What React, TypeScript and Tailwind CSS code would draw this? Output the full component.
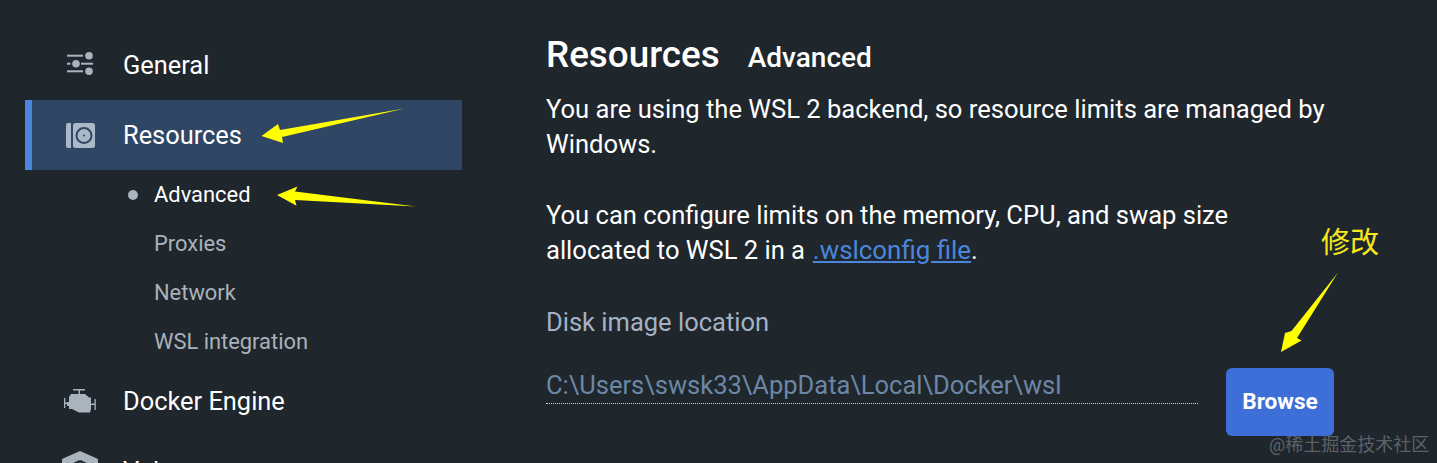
import React from "react";

const font = { fontFamily: "Roboto, 'Noto Sans CJK SC', sans-serif" };

function GeneralIcon() {
  return (
    <svg className="mb-[2px]" width="26" height="24" viewBox="0 0 26 24" fill="#aab4bf">
      <rect x="0" y="2.700" width="16" height="2" />
      <circle cx="22" cy="3.800" r="3.800" />
      <rect x="0" y="10.700" width="3.500" height="2" />
      <circle cx="9" cy="11.700" r="3.800" />
      <rect x="14" y="10.700" width="12" height="2" />
      <rect x="0" y="18.300" width="16" height="2" />
      <circle cx="22" cy="19.300" r="3.800" />
    </svg>
  );
}

function ResourcesIcon() {
  return (
    <svg width="29" height="25" viewBox="0 0 29 25">
      <path d="M0 2a2 2 0 0 1 2-2h3v25H2a2 2 0 0 1-2-2z" fill="#aab8c8" />
      <rect x="7" y="0" width="22" height="25" rx="2.500" fill="#aab8c8" />
      <circle cx="18" cy="12.500" r="7.500" fill="none" stroke="#2f4765" strokeWidth="2" />
      <circle cx="18" cy="12.500" r="1" fill="#2f4765" />
    </svg>
  );
}

function EngineIcon() {
  return (
    <svg width="32" height="24" viewBox="0 0 32 24" fill="#aab4bf">
      <path d="M9 0h12v1.400h-5V5h5l4 3.500h2V20l-1 3.500H15L8 20H5v-3H3v-4h2V8l2-3h7.500V1.400H9z" />
      <rect x="0" y="9" width="1.300" height="10" />
      <rect x="1" y="13.500" width="3" height="1.500" />
      <rect x="30.500" y="10" width="1.300" height="11" />
      <rect x="27" y="14.500" width="4" height="1.500" />
    </svg>
  );
}

function VolumesIcon() {
  return (
    <svg width="36" height="40" viewBox="0 0 36 40" fill="#aab4bf">
      <path d="M18 0l18 8v24l-18 8-18-8V8z" />
      <path d="M18 10l-8 4v9M18 10l8 4v9" fill="none" stroke="#1f262c" strokeWidth="2.500" />
    </svg>
  );
}

function MainItem({ icon, label, active }: { icon: React.ReactNode; label: string; active?: boolean }) {
  return (
    <div
      className={
        active
          ? "flex h-[70px] items-center border-l-[7px] border-[#4c86dc] bg-[#2f4765] pl-[18px]"
          : "flex h-[70px] items-center pl-[25px]"
      }
    >
      <span className="mr-[13px] flex w-[60px] items-center justify-center">{icon}</span>
      <span className="pt-[2px] text-[25.400px] leading-none text-white">{label}</span>
    </div>
  );
}

function SubItem({ label, active }: { label: string; active?: boolean }) {
  return (
    <div className="relative flex h-[49px] items-center pl-[129px]">
      {active && <span className="absolute left-[103px] h-[10px] w-[10px] rounded-full bg-[#aab4bf]" />}
      <span className={active ? "pt-[1px] text-[21.900px] leading-none text-white" : "pt-[1px] text-[21.900px] leading-none text-[#aab2ba]"}>
        {label}
      </span>
    </div>
  );
}

export default function App() {
  return (
    <div className="relative flex h-[463px] w-[1437px] overflow-hidden bg-[#1f262c]" style={font}>
      <nav className="ml-[25px] w-[437px] shrink-0 pt-[30px]">
        <MainItem icon={<GeneralIcon />} label="General" />
        <MainItem icon={<ResourcesIcon />} label="Resources" active />
        <SubItem label="Advanced" active />
        <SubItem label="Proxies" />
        <SubItem label="Network" />
        <SubItem label="WSL integration" />
        <MainItem icon={<EngineIcon />} label="Docker Engine" />
        <MainItem icon={<VolumesIcon />} label="Volumes" />
      </nav>

      <main className="ml-[84px] w-[806px] pt-[34px] text-white">
        <div className="flex items-baseline">
          <h1 className="text-[36.800px] font-medium leading-[42px]">Resources</h1>
          <h2 className="ml-[28px] text-[28px] font-medium leading-[42px]">Advanced</h2>
        </div>
        <p className="mt-[12.500px] text-[25.550px] leading-[35px]">
          You are using the WSL 2 backend, so resource limits are managed by
          <br />
          Windows.
        </p>
        <p className="mt-[36px] text-[25.550px] leading-[35px]">
          You can configure limits on the memory, CPU, and swap size
          <br />
          allocated to WSL 2 in a <span className="ml-[1.500px] text-[25.900px] text-[#4c86dc] underline">.wslconfig file</span>.
        </p>
        <div className="mt-[37px] text-[25.500px] leading-[35px] text-[#a5b2c4]">Disk image location</div>
        <div className="mt-[28px] flex items-start">
          <div className="w-[652px] border-b border-dotted border-[#d0d5da] text-[25.500px] leading-[35px] text-[#6b87a5]">
            {"C:\\Users\\swsk33\\AppData\\Local\\Docker\\wsl"}
          </div>
          <button className="ml-[28px] h-[68px] w-[108px] rounded-[6px] bg-[#3e6fd9] text-[22.600px] font-bold text-white">
            Browse
          </button>
        </div>
      </main>

      <div className="absolute left-[1321px] top-[225px] text-[29px] leading-[36px] text-[#f7e81b]">修改</div>
      <div className="absolute left-[1269px] top-[433px] text-[18px] leading-[24px] text-[#5c6268]">@稀土掘金技术社区</div>

      <svg className="absolute left-0 top-0" width="1437" height="463" viewBox="0 0 1437 463" fill="#ffff00">
        <path d="M404.500 108.500L280 130L278 124L261.500 136L283 143L282 137Z" />
        <path d="M416 206.500L295 191.500L297.500 186.500L277 195L296.500 205.700L295 200Z" />
        <path d="M1338 272.500L1297 338L1301.500 340.500L1281 352L1285 333L1291.500 331Z" />
      </svg>
    </div>
  );
}
